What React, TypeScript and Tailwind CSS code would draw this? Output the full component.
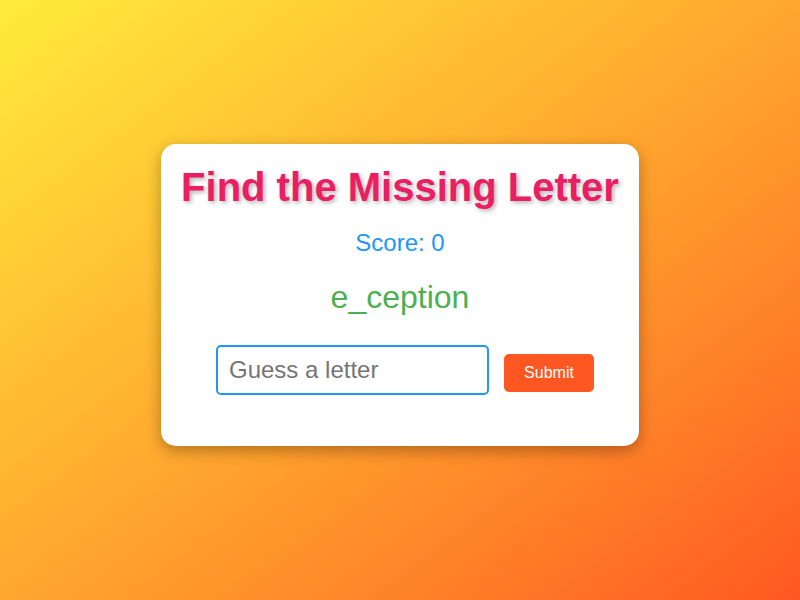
export default function App() {
  return (
    <div
      className="flex h-[600px] w-full items-center justify-center bg-gradient-to-br from-[#ffeb3b] to-[#ff5722] pb-[10px]"
      style={{ fontFamily: '"Liberation Sans", Arial, sans-serif' }}
    >
      <div className="flex w-[478px] flex-col items-center rounded-[15px] bg-white px-5 pt-5 pb-[51px] shadow-[0_5px_15px_rgba(0,0,0,0.3)]">
        <h1 className="text-[40px] leading-[46px] font-bold whitespace-nowrap text-[#e91e63] [text-shadow:2px_2px_4px_rgba(0,0,0,0.3)]">
          Find the Missing Letter
        </h1>
        <div className="mt-[19px] text-[24px] leading-[28px] text-[#2196f3]">Score: 0</div>
        <div className="mt-[22px] text-[32px] leading-[37px] text-[#4caf50]">e_ception</div>
        <div className="mt-[29px] ml-[10px] flex items-end gap-[15px]">
          <input
            type="text"
            placeholder="Guess a letter"
            className="h-[50px] w-[273px] rounded-[5px] border-2 border-[#2196f3] px-[11px] text-[24px] text-gray-800 outline-none placeholder:text-[#757575]"
          />
          <button className="mb-[3px] h-[38px] w-[90px] rounded-[5px] bg-[#ff5722] text-[16px] text-white">
            Submit
          </button>
        </div>
      </div>
    </div>
  );
}
